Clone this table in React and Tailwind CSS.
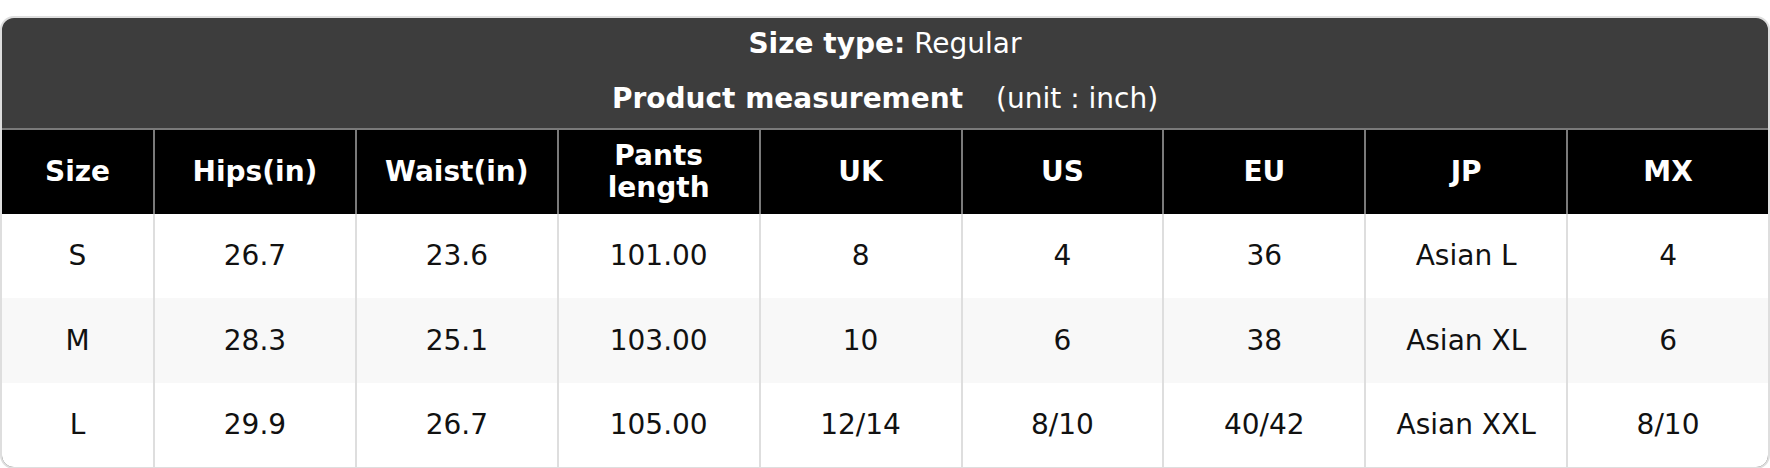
import React from "react";

const headers = ["Size", "Hips(in)", "Waist(in)", "Pants length", "UK", "US", "EU", "JP", "MX"];

const rows = [
  ["S", "26.7", "23.6", "101.00", "8", "4", "36", "Asian L", "4"],
  ["M", "28.3", "25.1", "103.00", "10", "6", "38", "Asian XL", "6"],
  ["L", "29.9", "26.7", "105.00", "12/14", "8/10", "40/42", "Asian XXL", "8/10"],
];

const App = () => {
  return (
    <div className="bg-white pt-4 font-['DejaVu_Sans',sans-serif] text-[28px]">
      <div className="overflow-hidden rounded-[14px] border-2 border-[#dedede] bg-[#3d3d3d]">
        {/* title band */}
        <div className="text-white">
          <div className="flex h-[51px] items-center justify-center">
            <span className="font-bold">Size type:</span>
            <span className="ml-[9px]">Regular</span>
          </div>
          <div className="flex h-[59px] items-center justify-center">
            <span className="font-bold">Product measurement</span>
            <span className="ml-[33px]">(unit : inch)</span>
          </div>
        </div>

        {/* header row */}
        <div className="grid h-[86px] grid-cols-[151px_repeat(8,minmax(0,1fr))] border-t-2 border-[#7a7a7a] bg-black text-white">
          {headers.map((h, i) => (
            <div
              key={h}
              className={
                "flex items-center justify-center px-2 text-center font-bold leading-[32px] " +
                (i > 0 ? "border-l-2 border-[#7a7a7a]" : "")
              }
            >
              {h === "Pants length" ? (
                <span>
                  Pants
                  <br />
                  length
                </span>
              ) : (
                h
              )}
            </div>
          ))}
        </div>

        {/* body rows */}
        {rows.map((row, r) => (
          <div
            key={row[0]}
            className={
              "grid grid-cols-[151px_repeat(8,minmax(0,1fr))] text-[#111] " +
              (r === 1 ? "h-[85px] bg-[#f8f8f8]" : "h-[84px] bg-white")
            }
          >
            {row.map((cell, i) => (
              <div
                key={i}
                className={
                  "flex items-center justify-center " +
                  (i > 0 ? "border-l-2 border-[#dedede]" : "")
                }
              >
                {cell}
              </div>
            ))}
          </div>
        ))}
      </div>
    </div>
  );
};

export default App;
